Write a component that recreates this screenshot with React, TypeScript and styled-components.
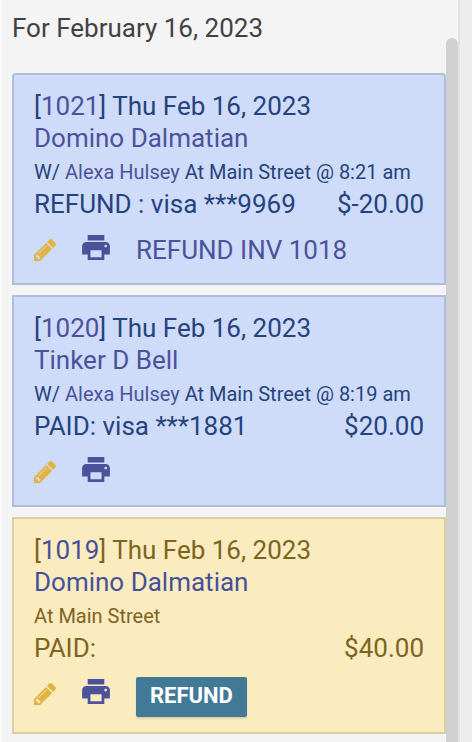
import React from "react";
import styled, { createGlobalStyle } from "styled-components";

type Tone = "info" | "warning";

const tones = {
  info: { background: "#cfdcf9", border: "#b1bedb", text: "#25437d", link: "#4c529a" },
  warning: { background: "#fbecc0", border: "#dccea3", text: "#7e6421", link: "#46509a" },
};

const GlobalStyle = createGlobalStyle`
  *, *::before, *::after { box-sizing: border-box; }
  body {
    margin: 0;
    background: #ededed;
    font-family: Roboto, "Liberation Sans", sans-serif;
    font-size: 26px;
    line-height: 32px;
    color: #424242;
  }
`;

const Page = styled.div`
  min-height: 100vh;
  display: flex;
  padding-right: 12px;
`;

const Panel = styled.main`
  flex: 1;
  min-width: 0;
  display: flex;
  background: #f4f4f4;
  border-left: 2px solid #fafafa;
  border-right: 2px solid #e2e2e2;
`;

const Content = styled.div`
  flex: 1;
  min-width: 0;
  padding: 12px 0 8px 10px;
`;

const ScrollThumb = styled.div`
  width: 12px;
  margin-top: 38px;
  border-radius: 6px 6px 0 0;
  background: #d0d0d0;
`;

const Heading = styled.h1`
  margin: 0 0 29px;
  font-size: 26px;
  font-weight: 400;
  line-height: 32px;
`;

const List = styled.div`
  display: flex;
  flex-direction: column;
  gap: 10px;
`;

const Card = styled.article<{ $tone: Tone; $first: boolean }>`
  min-height: 212px;
  padding: 15px 20px;
  border: 2px solid ${(p) => tones[p.$tone].border};
  border-radius: ${(p) => (p.$first ? "4px 4px 0 0" : "0")};
  background: ${(p) => tones[p.$tone].background};
  color: ${(p) => tones[p.$tone].text};

  a {
    color: ${(p) => tones[p.$tone].link};
    text-decoration: none;
  }
`;

const Line = styled.div`
  display: flex;
  justify-content: space-between;
  white-space: pre;
`;

const Detail = styled.div`
  padding-top: 2px;
  font-size: 20px;
`;

const Actions = styled.div`
  display: flex;
  align-items: flex-start;
  gap: 26px;
  padding-top: 13px;
`;

const IconButton = styled.button<{ $kind: "edit" | "print" }>`
  display: block;
  width: ${(p) => (p.$kind === "edit" ? "22px" : "28px")};
  margin: ${(p) => (p.$kind === "edit" ? "6px" : "2px")} 0 0;
  padding: 0;
  border: 0;
  background: none;
  color: ${(p) => (p.$kind === "edit" ? "#e3b341" : "#4c529a")};
  cursor: pointer;

  svg {
    display: block;
    width: 100%;
    fill: currentColor;
  }
`;

const RefundLink = styled.a`
  padding-top: 1px;
`;

const RefundButton = styled.button`
  height: 40px;
  padding: 0 14px 2px;
  border: 0;
  border-radius: 2px;
  background: #427997;
  box-shadow: 0 2px 2px rgba(0, 0, 0, 0.12);
  color: #fff;
  font-family: inherit;
  font-size: 22px;
  font-weight: 700;
  line-height: 32px;
  cursor: pointer;
`;

const PencilIcon = () => (
  <svg viewBox="128 149 1515 1515" height="22" aria-hidden="true">
    <path d="M491 1536l91-91-235-235-91 91v107h128v128h107zm523-928q0-22-22-22-10 0-17 7l-542 542q-7 7-7 17 0 22 22 22 10 0 17-7l542-542q7-7 7-17zm-54-192l416 416-832 832h-416v-416zm683 96q0 53-37 90l-166 166-416-416 166-165q36-38 90-38 53 0 91 38l235 234q37 39 37 91z" />
  </svg>
);

const PrinterIcon = () => (
  <svg viewBox="2 3 20 18" height="25" aria-hidden="true">
    <path d="M19 8H5c-1.66 0-3 1.34-3 3v6h4v4h12v-4h4v-6c0-1.66-1.34-3-3-3zm-3 11H8v-5h8v5zm3-7c-.55 0-1-.45-1-1s.45-1 1-1 1 .45 1 1-.45 1-1 1zm-1-9H6v4h12V3z" />
  </svg>
);

interface Invoice {
  id: string;
  tone: Tone;
  client: string;
  staff?: string;
  place: string;
  payment: string;
  amount: string;
  refundOf?: string;
  refundable?: boolean;
}

const invoices: Invoice[] = [
  {
    id: "1021",
    tone: "info",
    client: "Domino Dalmatian",
    staff: "Alexa Hulsey",
    place: "At Main Street @ 8:21 am",
    payment: "REFUND : visa ***9969",
    amount: "$-20.00",
    refundOf: "REFUND INV 1018",
  },
  {
    id: "1020",
    tone: "info",
    client: "Tinker D Bell",
    staff: "Alexa Hulsey",
    place: "At Main Street @ 8:19 am",
    payment: "PAID: visa ***1881",
    amount: "$20.00",
  },
  {
    id: "1019",
    tone: "warning",
    client: "Domino Dalmatian",
    place: "At Main Street",
    payment: "PAID:",
    amount: "$40.00",
    refundable: true,
  },
];

export default function App() {
  return (
    <>
      <GlobalStyle />
      <Page>
        <Panel>
          <Content>
            <Heading>For February 16, 2023</Heading>
            <List>
              {invoices.map((inv, i) => (
                <Card key={inv.id} $tone={inv.tone} $first={i === 0}>
                  <div>
                    [<a href="#invoice">{inv.id}</a>] Thu Feb 16, 2023
                  </div>
                  <div>
                    <a href="#client">{inv.client}</a>
                  </div>
                  <Detail>
                    {inv.staff && (
                      <>
                        W/ <a href="#staff">{inv.staff}</a>{" "}
                      </>
                    )}
                    {inv.place}
                  </Detail>
                  <Line>
                    <span>{inv.payment}</span>
                    <span>{inv.amount}</span>
                  </Line>
                  <Actions>
                    <IconButton $kind="edit" aria-label="Edit">
                      <PencilIcon />
                    </IconButton>
                    <IconButton $kind="print" aria-label="Print">
                      <PrinterIcon />
                    </IconButton>
                    {inv.refundOf && <RefundLink href="#refund">{inv.refundOf}</RefundLink>}
                    {inv.refundable && <RefundButton>REFUND</RefundButton>}
                  </Actions>
                </Card>
              ))}
            </List>
          </Content>
          <ScrollThumb />
        </Panel>
      </Page>
    </>
  );
}
